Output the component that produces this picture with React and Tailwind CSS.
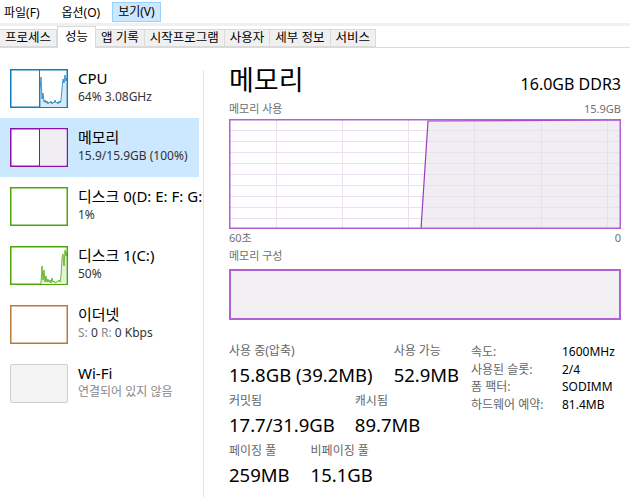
import React from 'react';

const FONT = { fontFamily: '"Noto Sans", "Noto Sans CJK KR", sans-serif' };

const TABS = ['프로세스', '성능', '앱 기록', '시작프로그램', '사용자', '세부 정보', '서비스'];

// 왼쪽 썸네일 그래프들
const CpuThumb = () => (
  <svg width="58" height="39" viewBox="0 0 58 39">
    <rect x="0.75" y="0.75" width="56.5" height="37.5" fill="#fff" stroke="#117dbb" strokeWidth="1.5" />
    <line x1="29.5" y1="1" x2="29.5" y2="38" stroke="#117dbb" strokeWidth="1" />
    <polyline
      fill="#d9eaf7"
      stroke="#117dbb"
      strokeWidth="0.8"
      points="30,38 30,22 31,8 32,30 33,24 34,33 35,31 36,34 37,32 38,35 39,33 40,34 41,32 42,35 43,33 44,34 45,31 46,34 47,33 48,35 49,32 50,34 51,31 52,20 53,10 54,14 55,6 56,12 57,9 57,38"
    />
  </svg>
);

const MemThumb = () => (
  <svg width="58" height="39" viewBox="0 0 58 39">
    <rect x="0.75" y="0.75" width="56.5" height="37.5" fill="#fff" stroke="#8b12ae" strokeWidth="1.5" />
    <rect x="30" y="1.5" width="26.5" height="36" fill="#f1eef3" />
    <line x1="29.5" y1="1" x2="29.5" y2="38" stroke="#8b12ae" strokeWidth="1" />
  </svg>
);

const DiskThumb = ({ chart }) => (
  <svg width="58" height="39" viewBox="0 0 58 39">
    <rect x="0.75" y="0.75" width="56.5" height="37.5" fill="#fff" stroke="#4da60c" strokeWidth="1.5" />
    {chart && (
      <polyline
        fill="#e4f2d9"
        stroke="#4da60c"
        strokeWidth="0.8"
        points="30,38 31,37 32,20 33,34 34,24 35,36 36,30 37,36 38,33 39,36 40,34 41,37 42,32 43,36 44,35 45,37 46,36 47,36 48,35 49,34 50,36 51,30 52,12 53,8 54,20 55,4 56,10 57,6 57,38"
      />
    )}
  </svg>
);

const EthThumb = () => (
  <svg width="58" height="39" viewBox="0 0 58 39">
    <rect x="0.75" y="0.75" width="56.5" height="37.5" fill="#fff" stroke="#b87a3c" strokeWidth="1.5" />
  </svg>
);

const WifiThumb = () => (
  <svg width="58" height="39" viewBox="0 0 58 39">
    <rect x="0.5" y="0.5" width="57" height="38" rx="1.5" fill="#f3f3f3" stroke="#cfcfcf" strokeWidth="1" />
  </svg>
);

const SideItem = ({ thumb, title, sub, selected }) => (
  <div className={`flex h-[59px] items-start pl-[10px] pt-[10px] ${selected ? 'bg-[#cce8ff]' : ''}`}>
    <div className="shrink-0">{thumb}</div>
    <div className="ml-[10px] flex min-w-0 flex-col whitespace-nowrap">
      <span className="text-[15px] leading-[18px] text-black">{title}</span>
      <span className="mt-[2px] text-[12px] leading-[15px] text-[#333]">{sub}</span>
    </div>
  </div>
);

// 메모리 사용 그래프
const UsageGraph = () => {
  const W = 392;
  const H = 110;
  const vx = [47, 113, 179, 245, 312, 378];
  const hy = [11, 22, 33, 44, 55, 66, 77, 88, 99];
  return (
    <svg width={W} height={H} viewBox={`0 0 ${W} ${H}`} className="block">
      <rect x="0" y="0" width={W} height={H} fill="#fff" />
      <polygon points={`192,${H} 199,2 ${W},1 ${W},${H}`} fill="#f1eef3" />
      {vx.map((x) => (
        <line key={x} x1={x + 0.5} y1="0" x2={x + 0.5} y2={H} stroke="#ecdff0" strokeWidth="1" />
      ))}
      {hy.map((y) => (
        <line key={y} x1="0" y1={y + 0.5} x2={W} y2={y + 0.5} stroke="#ecdff0" strokeWidth="1" />
      ))}
      <polyline points={`192,${H} 199,2 ${W},1`} fill="none" stroke="#9a3cc2" strokeWidth="1.2" />
      <rect x="0.75" y="0.75" width={W - 1.5} height={H - 1.5} fill="none" stroke="#b35fd6" strokeWidth="1.5" />
    </svg>
  );
};

const Stat = ({ label, value }) => (
  <div className="flex flex-col whitespace-nowrap">
    <span className="text-[12px] leading-[16px] text-[#666]">{label}</span>
    <span className="mt-[3px] text-[18.5px] leading-[26px] text-black">{value}</span>
  </div>
);

export default function App() {
  return (
    <div className="flex h-[497px] w-[630px] flex-col overflow-hidden bg-white" style={FONT}>
      {/* 메뉴 바 */}
      <div className="flex h-[22px] items-end text-[12px] leading-[18px] text-black">
        <span className="ml-[3px] px-[1px]">파일(F)</span>
        <span className="ml-[20px] px-[1px]">옵션(O)</span>
        <span className="ml-[11px] border border-[#99d1ff] bg-[#cce8ff] px-[5px]">보기(V)</span>
      </div>
      {/* 탭 */}
      <div className="mt-[1px] flex h-[25px] items-end border-t-[3px] border-[#f0f0f0] border-b border-b-[#dadada]">
        {TABS.map((t) =>
          t === '성능' ? (
            <div key={t} className="-mb-px flex h-[22px] items-center border border-b-0 border-[#dadada] bg-white px-[7px] text-[12.5px]">
              {t}
            </div>
          ) : (
            <div key={t} className="flex h-[18px] items-center border-y border-r border-[#dadada] bg-[#f0f0f0] px-[5px] text-[12.5px] first:border-l-0">
              {t}
            </div>
          )
        )}
      </div>

      <div className="flex min-h-0 flex-1">
        {/* 사이드바 */}
        <div className="w-[203px] shrink-0 overflow-hidden pt-[11px]">
          <div className="mr-[4px]">
            <SideItem thumb={<CpuThumb />} title="CPU" sub="64% 3.08GHz" />
            <SideItem thumb={<MemThumb />} title="메모리" sub="15.9/15.9GB (100%)" selected />
            <SideItem thumb={<DiskThumb />} title="디스크 0(D: E: F: G:)" sub="1%" />
            <SideItem thumb={<DiskThumb chart />} title="디스크 1(C:)" sub="50%" />
            <SideItem
              thumb={<EthThumb />}
              title="이더넷"
              sub={
                <>
                  <span className="text-[#888]">S: </span>0 <span className="text-[#888]">R: </span>0 Kbps
                </>
              }
            />
            <SideItem thumb={<WifiThumb />} title="Wi-Fi" sub={<span className="text-[#888]">연결되어 있지 않음</span>} />
          </div>
        </div>
        <div className="mt-[22px] w-px bg-[#e2e2e2]" />

        {/* 메인 */}
        <div className="flex w-[417px] flex-col pl-[25px] pt-[15px]">
          <div className="flex items-end justify-between">
            <span className="text-[27px] leading-[34px] text-black">메모리</span>
            <span className="mb-[2px] text-[16px] leading-[22px] text-black">16.0GB DDR3</span>
          </div>
          <div className="mt-[5px] flex justify-between text-[11px] leading-[14px] text-[#707070]">
            <span>메모리 사용</span>
            <span>15.9GB</span>
          </div>
          <div className="mt-[3px]">
            <UsageGraph />
          </div>
          <div className="mt-[2px] flex justify-between text-[11px] leading-[14px] text-[#707070]">
            <span>60초</span>
            <span>0</span>
          </div>
          <div className="mt-[4px] text-[11px] leading-[14px] text-[#707070]">메모리 구성</div>
          <div className="mt-[6px] h-[51px] border-2 border-[#b35fd6] bg-[#f3f0f4]" />

          <div className="mt-[23px] flex items-start">
            <div className="flex w-[242px] flex-col gap-[5px]">
              <div className="flex gap-[21px]">
                <Stat label="사용 중(압축)" value="15.8GB (39.2MB)" />
                <Stat label="사용 가능" value="52.9MB" />
              </div>
              <div className="flex gap-[20px]">
                <Stat label="커밋됨" value="17.7/31.9GB" />
                <Stat label="캐시됨" value="89.7MB" />
              </div>
              <div className="flex gap-[21px]">
                <Stat label="페이징 풀" value="259MB" />
                <Stat label="비페이징 풀" value="15.1GB" />
              </div>
            </div>
            <div className="grid grid-cols-[91px_auto] text-[12px] leading-[17.5px] whitespace-nowrap">
              <span className="text-[#666]">속도:</span>
              <span className="text-black">1600MHz</span>
              <span className="text-[#666]">사용된 슬롯:</span>
              <span className="text-black">2/4</span>
              <span className="text-[#666]">폼 팩터:</span>
              <span className="text-black">SODIMM</span>
              <span className="text-[#666]">하드웨어 예약:</span>
              <span className="text-black">81.4MB</span>
            </div>
          </div>
        </div>
      </div>
    </div>
  );
}
